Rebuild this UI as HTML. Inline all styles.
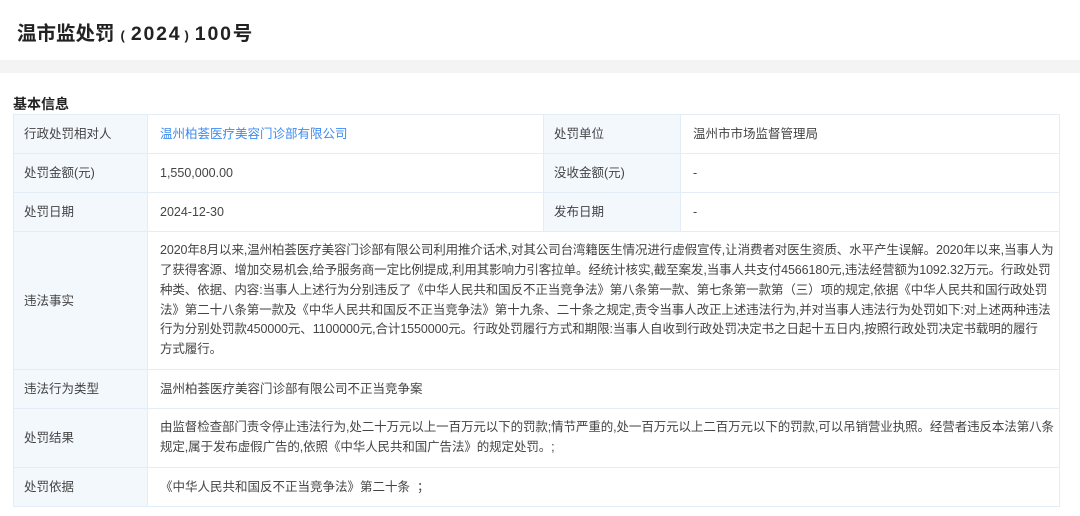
<!DOCTYPE html>
<html><head><meta charset="utf-8"><style>
*{margin:0;padding:0;box-sizing:border-box}
body{width:1080px;height:516px;background:#fff;font-family:"Liberation Sans","Noto Sans CJK SC",sans-serif;color:#444;overflow:hidden;position:relative}
h1{position:absolute;left:17px;top:17px;font-size:19.5px;font-weight:bold;color:#222;white-space:nowrap}
h1 span{font-size:13px;margin:0 6px}
h1 b{letter-spacing:1.8px}
.band{position:absolute;left:0;top:60px;width:1080px;height:13px;background:#f4f4f4}
.sec{position:absolute;left:13px;top:94px;font-size:14px;font-weight:bold;color:#222}
table{position:absolute;left:13px;top:114px;width:1047px;border-collapse:collapse;font-size:12.5px;line-height:16px;table-layout:fixed}
td{border:1px solid #e3edf7;padding:0 4px 0 12px;vertical-align:middle;color:#444;overflow:hidden}
td.l{background:#f3f8fd;width:134px;padding-left:10px}
td.l2{background:#f3f8fd;width:137px;padding-left:10px}
td.v{width:396px}
a{color:#3d8bf0;text-decoration:none}
.txt{line-height:19.7px;padding:8px 0 8px;white-space:nowrap;letter-spacing:-0.1px}
</style></head><body>
<h1>温市监处罚<span>(</span><b>2024</b><span style="margin-left:3px">)</span><b>100</b>号</h1>
<div class="band"></div>
<div class="sec">基本信息</div>
<table>
<colgroup><col style="width:134px"><col style="width:396px"><col style="width:137px"><col></colgroup>
<tr style="height:39px"><td class="l">行政处罚相对人</td><td class="v"><a>温州柏荟医疗美容门诊部有限公司</a></td><td class="l2">处罚单位</td><td>温州市市场监督管理局</td></tr>
<tr style="height:39px"><td class="l">处罚金额(元)</td><td class="v">1,550,000.00</td><td class="l2">没收金额(元)</td><td>-</td></tr>
<tr style="height:39px"><td class="l">处罚日期</td><td class="v">2024-12-30</td><td class="l2">发布日期</td><td>-</td></tr>
<tr style="height:138px"><td class="l">违法事实</td><td colspan="3"><div class="txt">2020年8月以来,温州柏荟医疗美容门诊部有限公司利用推介话术,对其公司台湾籍医生情况进行虚假宣传,让消费者对医生资质、水平产生误解。2020年以来,当事人为<br>了获得客源、增加交易机会,给予服务商一定比例提成,利用其影响力引客拉单。经统计核实,截至案发,当事人共支付4566180元,违法经营额为1092.32万元。行政处罚<br>种类、依据、内容:当事人上述行为分别违反了《中华人民共和国反不正当竞争法》第八条第一款、第七条第一款第（三）项的规定,依据《中华人民共和国行政处罚<br>法》第二十八条第一款及《中华人民共和国反不正当竞争法》第十九条、二十条之规定,责令当事人改正上述违法行为,并对当事人违法行为处罚如下:对上述两种违法<br>行为分别处罚款450000元、1100000元,合计1550000元。行政处罚履行方式和期限:当事人自收到行政处罚决定书之日起十五日内,按照行政处罚决定书载明的履行<br>方式履行。</div></td></tr>
<tr style="height:39px"><td class="l">违法行为类型</td><td colspan="3">温州柏荟医疗美容门诊部有限公司不正当竞争案</td></tr>
<tr style="height:59px"><td class="l">处罚结果</td><td colspan="3"><div class="txt" style="padding:0">由监督检查部门责令停止违法行为,处二十万元以上一百万元以下的罚款;情节严重的,处一百万元以上二百万元以下的罚款,可以吊销营业执照。经营者违反本法第八条<br>规定,属于发布虚假广告的,依照《中华人民共和国广告法》的规定处罚。;</div></td></tr>
<tr style="height:39px"><td class="l">处罚依据</td><td colspan="3">《中华人民共和国反不正当竞争法》第二十条 &nbsp;；</td></tr>
</table>
</body></html>
